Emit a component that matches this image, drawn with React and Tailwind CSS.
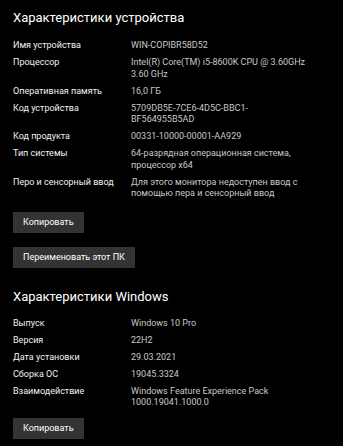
import React from "react";

const device = [
    ["Имя устройства", ["WIN-COPIBR58D52"]],
    ["Процессор", ["Intel(R) Core(TM) i5-8600K CPU @ 3.60GHz", "3.60 GHz"]],
    ["Оперативная память", ["16,0 ГБ"]],
    ["Код устройства", ["5709DB5E-7CE6-4D5C-BBC1-", "BF564955B5AD"]],
    ["Код продукта", ["00331-10000-00001-AA929"]],
    ["Тип системы", ["64-разрядная операционная система,", "процессор x64"]],
    ["Перо и сенсорный ввод", ["Для этого монитора недоступен ввод с", "помощью пера и сенсорный ввод"]],
];

const windows = [
    ["Выпуск", ["Windows 10 Pro"]],
    ["Версия", ["22H2"]],
    ["Дата установки", ["29.03.2021"]],
    ["Сборка ОС", ["19045.3324"]],
    ["Взаимодействие", ["Windows Feature Experience Pack", "1000.19041.1000.0"]],
];

export default function App() {
    return (
        <div
            className="w-[343px] h-[446px] bg-black text-white px-[13px] pt-[8px] overflow-hidden"
            style={{ fontFamily: 'Roboto, "Noto Sans", sans-serif' }}
        >
            {/* DEVICE */}
            <h2 className="text-[13px] leading-[20px] text-white">Характеристики устройства</h2>
            <Specs rows={device} className="mt-[12px]" />
            <Button className="mt-[12px]">Копировать</Button>
            <Button className="mt-[14px]">Переименовать этот ПК</Button>

            {/* WINDOWS */}
            <h2 className="mt-[19px] text-[13px] leading-[20px] text-white">Характеристики Windows</h2>
            <Specs rows={windows} className="mt-[11px]" />
            <Button className="mt-[9px]">Копировать</Button>
        </div>
    );
}

function Specs({ rows, className }) {
    return (
        <div className={`grid grid-cols-[118px_1fr] gap-y-[5.5px] text-[9px] leading-[11.5px] ${className}`}>
            {rows.map(([label, lines]) => (
                <React.Fragment key={label}>
                    <div className="text-[#f2f2f2] whitespace-nowrap">{label}</div>
                    <div className="text-[#c8c8c8]">
                        {lines.map((l) => (
                            <div key={l} className="whitespace-nowrap">{l}</div>
                        ))}
                    </div>
                </React.Fragment>
            ))}
        </div>
    );
}

function Button({ children, className }) {
    return (
        <div className={`flex ${className}`}>
            <button className="h-[21px] px-[10px] bg-[#333333] text-white text-[9px] leading-[12px]">
                {children}
            </button>
        </div>
    );
}
